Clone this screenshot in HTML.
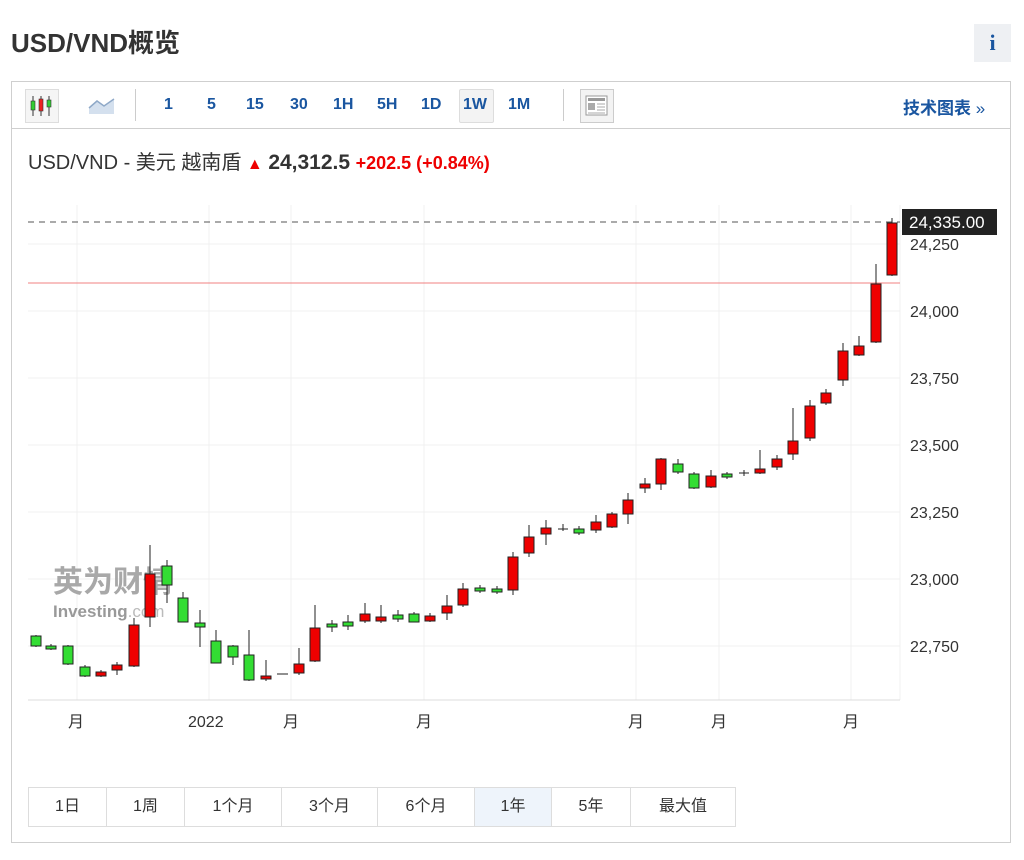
<!DOCTYPE html>
<html><head><meta charset="utf-8"><style>
body{margin:0;width:1024px;height:860px;background:#fff;font-family:"Liberation Sans","Noto Sans CJK SC",sans-serif;position:relative;overflow:hidden}
.abs{position:absolute}
.h1{left:11px;top:23px;font-size:26px;font-weight:bold;color:#333}
.info{left:974px;top:24px;width:37px;height:38px;background:#eef0f3;color:#1a56a0;font-weight:bold;font-size:22px;text-align:center;line-height:38px;font-family:"Liberation Serif",serif}
.box{left:11px;top:81px;width:998px;height:760px;border:1px solid #cfcfcf}
.tb{left:12px;top:82px;width:998px;height:46px;border-bottom:1px solid #cfcfcf}
.tbt{top:96px;font-size:16px;font-weight:bold;color:#1a56a0}
.btns{left:28px;top:787px;display:flex;border:1px solid #ddd}
.btns div{height:38px;line-height:38px;text-align:center;font-size:16px;color:#333;border-right:1px solid #ddd}
</style></head><body>
<div class="abs h1">USD/VND概览</div>
<div class="abs info">i</div>
<div class="abs box"></div>
<div class="abs tb"></div>
<div class="abs" style="left:25px;top:89px;width:32px;height:32px;border:1px solid #ddd;background:#f5f5f5"></div>
<svg class="abs" style="left:25px;top:89px" width="34" height="34">
<line x1="8" y1="7" x2="8" y2="27" stroke="#333"/><rect x="6" y="12" width="4" height="9" fill="#3c3" stroke="#333" stroke-width=".6"/>
<line x1="16" y1="7" x2="16" y2="27" stroke="#333"/><rect x="14" y="10" width="4" height="12" fill="#e22" stroke="#333" stroke-width=".6"/>
<line x1="24" y1="7" x2="24" y2="27" stroke="#333"/><rect x="22" y="11" width="4" height="7" fill="#3c3" stroke="#333" stroke-width=".6"/>
</svg>
<svg class="abs" style="left:88px;top:96px" width="28" height="20"><path d="M1 12 L9 5 L16 10 L26 3 L26 18 L1 18Z" fill="#d4e0ee"/><path d="M1 12 L9 5 L16 10 L26 3" fill="none" stroke="#8fa9c8" stroke-width="1.5"/></svg>
<div class="abs" style="left:135px;top:89px;width:1px;height:32px;background:#ccc"></div>
<div class="abs tbt" style="left:164px">1</div>
<div class="abs tbt" style="left:207px">5</div>
<div class="abs tbt" style="left:246px">15</div>
<div class="abs tbt" style="left:290px">30</div>
<div class="abs tbt" style="left:333px">1H</div>
<div class="abs tbt" style="left:377px">5H</div>
<div class="abs tbt" style="left:421px">1D</div>
<div class="abs" style="left:459px;top:89px;width:33px;height:32px;border:1px solid #ddd;background:#f3f3f3;border-radius:2px"></div>
<div class="abs tbt" style="left:463px">1W</div>
<div class="abs tbt" style="left:508px">1M</div>
<div class="abs" style="left:563px;top:89px;width:1px;height:32px;background:#ccc"></div>
<div class="abs" style="left:580px;top:89px;width:32px;height:32px;border:1px solid #ccc;background:#f3f3f3"></div>
<svg class="abs" style="left:585px;top:95px" width="24" height="22"><rect x="1" y="1" width="21" height="19" fill="#fff" stroke="#999"/><rect x="3" y="3" width="17" height="3" fill="#999"/><rect x="3" y="8" width="7" height="7" fill="#aaa"/><path d="M12 9h8M12 12h8M12 15h8M3 18h17" stroke="#aaa"/></svg>
<div class="abs tbt" style="left:903px;top:94px;font-size:17px">技术图表 <span style="font-weight:normal">»</span></div>
<div class="abs" style="left:28px;top:146px;font-size:20px;color:#333">USD/VND - 美元 越南盾 <span style="color:#e00;font-size:16px">&#9650;</span> <b style="font-size:21px">24,312.5</b> <span style="color:#e00;font-weight:bold;font-size:18px">+202.5 (+0.84%)</span></div>
<svg class="abs" style="left:0;top:0" width="1024" height="860">
<g stroke="#f0f0f0">
<line x1="28" y1="244" x2="900" y2="244"/><line x1="28" y1="311" x2="900" y2="311"/><line x1="28" y1="378" x2="900" y2="378"/><line x1="28" y1="445" x2="900" y2="445"/><line x1="28" y1="512" x2="900" y2="512"/><line x1="28" y1="579" x2="900" y2="579"/><line x1="28" y1="646" x2="900" y2="646"/>
<line x1="77" y1="205" x2="77" y2="700"/><line x1="209" y1="205" x2="209" y2="700"/><line x1="291" y1="205" x2="291" y2="700"/><line x1="424" y1="205" x2="424" y2="700"/><line x1="636" y1="205" x2="636" y2="700"/><line x1="719" y1="205" x2="719" y2="700"/><line x1="851" y1="205" x2="851" y2="700"/><line x1="900" y1="205" x2="900" y2="700"/>
</g>
<line x1="28" y1="700" x2="900" y2="700" stroke="#ddd"/>
<text x="53" y="592" font-size="30" font-weight="bold" fill="#a8a8a8" font-family="Noto Sans CJK SC,sans-serif">英为财情</text>
<text x="53" y="617" font-size="17" font-weight="bold" fill="#999">Investing<tspan font-weight="normal" fill="#bbb">.com</tspan></text>
<line x1="28" y1="283" x2="900" y2="283" stroke="#f08080"/>
<line x1="28" y1="222" x2="900" y2="222" stroke="#555" stroke-dasharray="6,5"/>
<g stroke="#222" stroke-width="1">
<line x1="36" y1="635" x2="36" y2="647"/><rect x="31" y="636" width="10" height="10" fill="#3d3"/>
<line x1="51" y1="644" x2="51" y2="650"/><rect x="46" y="646" width="10" height="3" fill="#3d3"/>
<line x1="68" y1="645" x2="68" y2="665"/><rect x="63" y="646" width="10" height="18" fill="#3d3"/>
<line x1="85" y1="665" x2="85" y2="677"/><rect x="80" y="667" width="10" height="9" fill="#3d3"/>
<line x1="101" y1="670" x2="101" y2="677"/><rect x="96" y="672" width="10" height="4" fill="#e00"/>
<line x1="117" y1="662" x2="117" y2="675"/><rect x="112" y="665" width="10" height="5" fill="#e00"/>
<line x1="134" y1="618" x2="134" y2="667"/><rect x="129" y="625" width="10" height="41" fill="#e00"/>
<line x1="150" y1="545" x2="150" y2="627"/><rect x="145" y="574" width="10" height="43" fill="#e00"/>
<line x1="167" y1="560" x2="167" y2="603"/><rect x="162" y="566" width="10" height="19" fill="#3d3"/>
<line x1="183" y1="592" x2="183" y2="622"/><rect x="178" y="598" width="10" height="24" fill="#3d3"/>
<line x1="200" y1="610" x2="200" y2="647"/><rect x="195" y="623" width="10" height="4" fill="#3d3"/>
<line x1="216" y1="630" x2="216" y2="663"/><rect x="211" y="641" width="10" height="22" fill="#3d3"/>
<line x1="233" y1="645" x2="233" y2="665"/><rect x="228" y="646" width="10" height="11" fill="#3d3"/>
<line x1="249" y1="630" x2="249" y2="681"/><rect x="244" y="655" width="10" height="25" fill="#3d3"/>
<line x1="266" y1="660" x2="266" y2="681"/><rect x="261" y="676" width="10" height="3" fill="#e00"/>
<line x1="277" y1="674" x2="288" y2="674"/>
<line x1="299" y1="648" x2="299" y2="675"/><rect x="294" y="664" width="10" height="9" fill="#e00"/>
<line x1="315" y1="605" x2="315" y2="662"/><rect x="310" y="628" width="10" height="33" fill="#e00"/>
<line x1="332" y1="620" x2="332" y2="632"/><rect x="327" y="624" width="10" height="3" fill="#3d3"/>
<line x1="348" y1="615" x2="348" y2="630"/><rect x="343" y="622" width="10" height="4" fill="#3d3"/>
<line x1="365" y1="603" x2="365" y2="623"/><rect x="360" y="614" width="10" height="7" fill="#e00"/>
<line x1="381" y1="605" x2="381" y2="623"/><rect x="376" y="617" width="10" height="4" fill="#e00"/>
<line x1="398" y1="610" x2="398" y2="622"/><rect x="393" y="615" width="10" height="4" fill="#3d3"/>
<line x1="414" y1="612" x2="414" y2="622"/><rect x="409" y="614" width="10" height="8" fill="#3d3"/>
<line x1="430" y1="613" x2="430" y2="622"/><rect x="425" y="616" width="10" height="5" fill="#e00"/>
<line x1="447" y1="595" x2="447" y2="620"/><rect x="442" y="606" width="10" height="7" fill="#e00"/>
<line x1="463" y1="583" x2="463" y2="607"/><rect x="458" y="589" width="10" height="16" fill="#e00"/>
<line x1="480" y1="585" x2="480" y2="593"/><rect x="475" y="588" width="10" height="3" fill="#3d3"/>
<line x1="497" y1="586" x2="497" y2="594"/><rect x="492" y="589" width="10" height="3" fill="#3d3"/>
<line x1="513" y1="552" x2="513" y2="595"/><rect x="508" y="557" width="10" height="33" fill="#e00"/>
<line x1="529" y1="525" x2="529" y2="557"/><rect x="524" y="537" width="10" height="16" fill="#e00"/>
<line x1="546" y1="520" x2="546" y2="545"/><rect x="541" y="528" width="10" height="6" fill="#e00"/>
<line x1="563" y1="524" x2="563" y2="531"/><line x1="558" y1="529" x2="568" y2="529"/>
<line x1="579" y1="526" x2="579" y2="535"/><rect x="574" y="529" width="10" height="4" fill="#3d3"/>
<line x1="596" y1="515" x2="596" y2="533"/><rect x="591" y="522" width="10" height="8" fill="#e00"/>
<line x1="612" y1="512" x2="612" y2="528"/><rect x="607" y="514" width="10" height="13" fill="#e00"/>
<line x1="628" y1="493" x2="628" y2="524"/><rect x="623" y="500" width="10" height="14" fill="#e00"/>
<line x1="645" y1="478" x2="645" y2="493"/><rect x="640" y="484" width="10" height="4" fill="#e00"/>
<line x1="661" y1="458" x2="661" y2="490"/><rect x="656" y="459" width="10" height="25" fill="#e00"/>
<line x1="678" y1="459" x2="678" y2="474"/><rect x="673" y="464" width="10" height="8" fill="#3d3"/>
<line x1="694" y1="472" x2="694" y2="489"/><rect x="689" y="474" width="10" height="14" fill="#3d3"/>
<line x1="711" y1="470" x2="711" y2="488"/><rect x="706" y="476" width="10" height="11" fill="#e00"/>
<line x1="727" y1="472" x2="727" y2="479"/><rect x="722" y="474" width="10" height="3" fill="#3d3"/>
<line x1="739" y1="473" x2="749" y2="473"/><line x1="744" y1="470" x2="744" y2="476"/>
<line x1="760" y1="450" x2="760" y2="474"/><rect x="755" y="469" width="10" height="4" fill="#e00"/>
<line x1="777" y1="455" x2="777" y2="470"/><rect x="772" y="459" width="10" height="8" fill="#e00"/>
<line x1="793" y1="408" x2="793" y2="460"/><rect x="788" y="441" width="10" height="13" fill="#e00"/>
<line x1="810" y1="400" x2="810" y2="441"/><rect x="805" y="406" width="10" height="32" fill="#e00"/>
<line x1="826" y1="389" x2="826" y2="405"/><rect x="821" y="393" width="10" height="10" fill="#e00"/>
<line x1="843" y1="343" x2="843" y2="386"/><rect x="838" y="351" width="10" height="29" fill="#e00"/>
<line x1="859" y1="336" x2="859" y2="356"/><rect x="854" y="346" width="10" height="9" fill="#e00"/>
<line x1="876" y1="264" x2="876" y2="343"/><rect x="871" y="284" width="10" height="58" fill="#e00"/>
<line x1="892" y1="218" x2="892" y2="276"/><rect x="887" y="223" width="10" height="52" fill="#e00"/>
</g>
<g font-size="16" fill="#333">
<text x="910" y="250">24,250</text><text x="910" y="317">24,000</text><text x="910" y="384">23,750</text><text x="910" y="451">23,500</text><text x="910" y="518">23,250</text><text x="910" y="585">23,000</text><text x="910" y="652">22,750</text>
</g>
<rect x="902" y="209" width="95" height="26" fill="#222"/>
<text x="909" y="228" font-size="17" fill="#fff">24,335.00</text>
<g font-size="16" fill="#333" font-family="Liberation Sans,Noto Sans CJK SC,sans-serif">
<text x="68" y="727">月</text><text x="188" y="727">2022</text><text x="283" y="727">月</text><text x="416" y="727">月</text><text x="628" y="727">月</text><text x="711" y="727">月</text><text x="843" y="727">月</text>
</g>
</svg>
<div class="abs btns">
<div style="width:77px">1日</div><div style="width:77px">1周</div><div style="width:96px">1个月</div><div style="width:95px">3个月</div><div style="width:96px">6个月</div><div style="width:76px;background:#eef4fb">1年</div><div style="width:78px">5年</div><div style="width:104px;border-right:none">最大值</div>
</div>
</body></html>
